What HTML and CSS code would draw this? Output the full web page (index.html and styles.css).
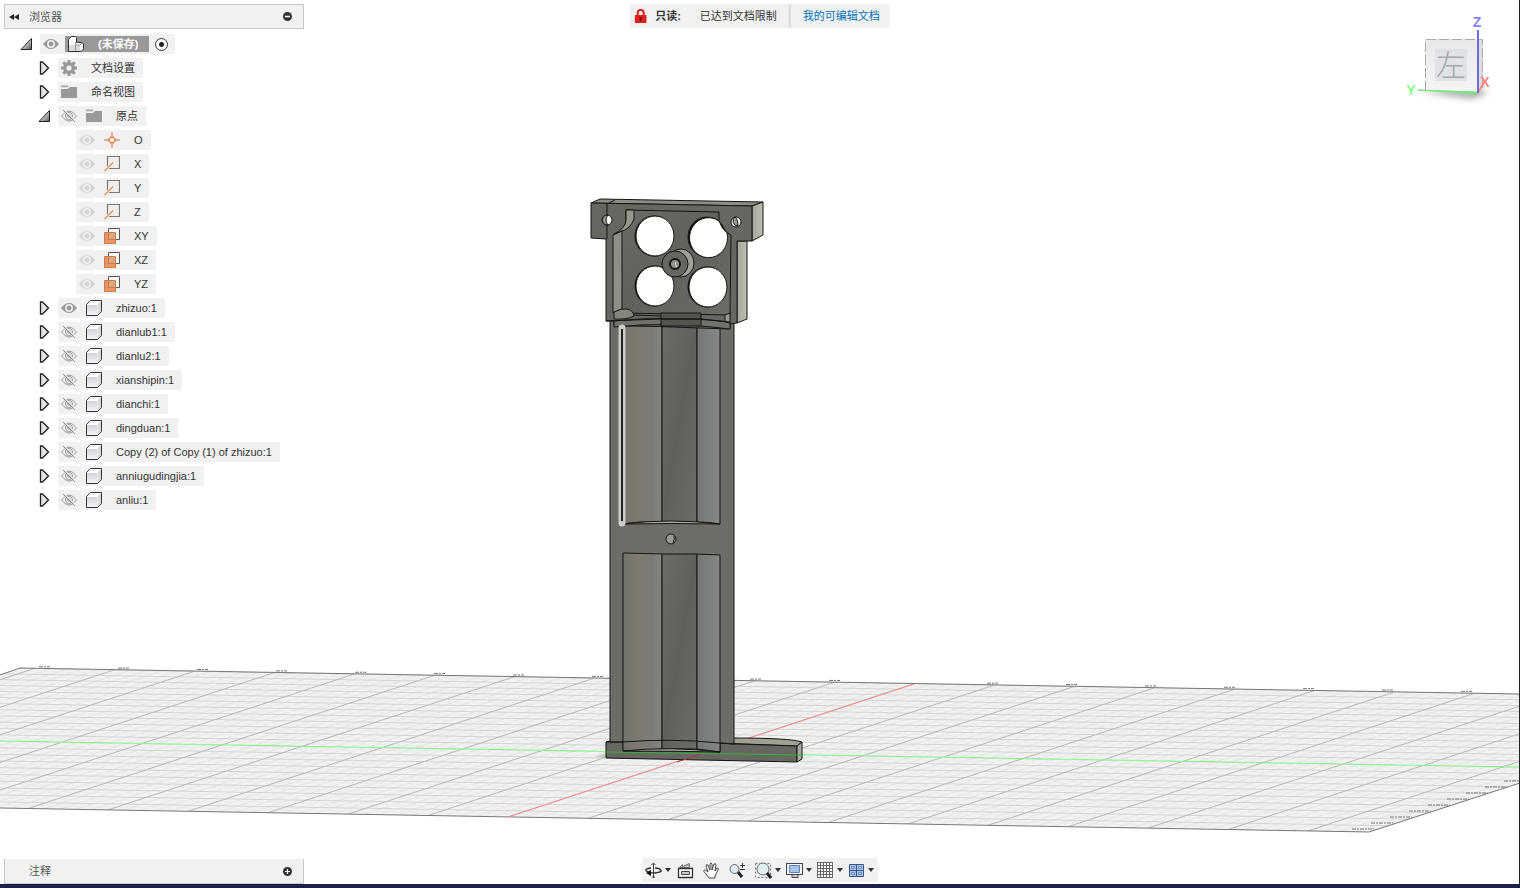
FILE: index.html
```html
<!DOCTYPE html>
<html lang="zh-CN">
<head>
  <meta charset="UTF-8">
  <title>未保存</title>
  <meta name="viewport" content="width=device-width, initial-scale=1.0">
  <link rel="stylesheet" href="styles.css">
</head>
<body>
  <!-- Shared icons -->
  <svg class="sprite" aria-hidden="true">
    <defs>
      <linearGradient id="boxShade" x1="0" y1="0" x2="0" y2="1">
        <stop offset="0" stop-color="#d3d5da"/><stop offset="1" stop-color="#f1f2f4"/>
      </linearGradient>
      <linearGradient id="openShade" x1="0" y1="0" x2="1" y2="1">
        <stop offset="0.3" stop-color="#eee"/><stop offset="1" stop-color="#555"/>
      </linearGradient>
      <symbol id="closed" viewBox="0 0 12 14"><path d="M2.500 1v12h2l6-6-6-6z" fill="#e2e3e6" stroke="#222" stroke-width="1.300"/></symbol>
      <symbol id="open" viewBox="0 0 12 14"><path d="M11.500 1.500v11H1z" fill="url(#openShade)" stroke="#222"/></symbol>
      <symbol id="eye" viewBox="0 0 16 16"><path d="M0 8q8-10 16 0q-8 10-16 0z" fill="currentColor"/><circle cx="8" cy="8" r="3.200" fill="none" stroke="#f1f1f1" stroke-width="1.500"/></symbol>
      <symbol id="eye-off" viewBox="0 0 16 16"><g fill="none" stroke="#999"><path d="M.5 8q7.500-10 15 0q-7.500 10-15 0z"/><circle cx="8" cy="8" r="3.500"/><circle cx="8" cy="8" r="1.200"/><path d="M3 1.500l12 12" stroke="#f1f1f1"/><path d="M2 2l12 12" stroke="#888"/></g></symbol>
      <symbol id="folder" viewBox="0 0 16 16"><path d="M0 5h7l2-2h7v11H0z" fill="#999"/><path d="M0 1.500h7v1.500H0z" fill="#aaa"/><path d="M0 3.500h7l1-1" stroke="#ddd" fill="none"/></symbol>
      <symbol id="gear" viewBox="0 0 16 16"><circle cx="8" cy="8" r="4.300" fill="none" stroke="#999" stroke-width="3.400"/><g stroke="#999" stroke-width="3"><path d="M8 0v3M8 13v3M0 8h3M13 8h3M2.300 2.300l2.200 2.200M11.500 11.500l2.200 2.200M2.300 13.700l2.200-2.200M11.500 4.500l2.200-2.200"/></g></symbol>
      <symbol id="box" viewBox="0 0 16 16"><path d="M.5 4.500l4-4h11v11l-4 4H.5z" fill="#fff" stroke="#333338"/><path d="M1 5h10v10H1z" fill="url(#boxShade)"/><path d="M11.500 4.500l3.500-3.500v10.500l-3.500 3.500z" fill="#d9dade"/></symbol>
      <symbol id="origin" viewBox="0 0 16 16"><path d="M8 0v16M0 8h16" stroke="#b87a50"/><path d="M8 3l5 5-5 5-5-5z" fill="#e1935b"/><circle cx="8" cy="8" r="2" fill="#fff"/></symbol>
      <symbol id="axis" viewBox="0 0 16 16"><path d="M3.500.5h12v12h-12z" fill="#eee" stroke="#777" stroke-width="1.200"/><path d="M0 15.500l9-9" stroke="#f1f1f1" stroke-width="3"/><path d="M.5 15l8.500-8.500" stroke="#e78d55" stroke-width="1.200"/></symbol>
      <symbol id="plane" viewBox="0 0 16 16"><path d="M4.500.5h11v11h-11z" fill="#fafafa" stroke="#555"/><path d="M.5 4.500h11v11H.5z" fill="#e6975f" stroke="#c87d48"/><path d="M5 5h6v6H5z" fill="#dfa77f"/><path d="M4.500 5v6.500h7" fill="none" stroke="#c87d48"/></symbol>
      <symbol id="caret" viewBox="0 0 6 4"><path d="M0 0h6L3 4z" fill="#333"/></symbol>
    </defs>
  </svg>

  <main class="workspace">
    <svg class="scene" viewBox="0 0 1520 888" preserveAspectRatio="none" role="img" aria-label="zhizuo">
      <defs>
        <clipPath id="floorClip"><path d="M-2 676L20 668L1520 694V783L1369 832L-2 808z"/></clipPath>
        <linearGradient id="metal" x1="0" y1="0" x2="1" y2="1"><stop offset="0" stop-color="#6b6c66"/><stop offset=".5" stop-color="#60615a"/><stop offset="1" stop-color="#6c6d66"/></linearGradient>
        <linearGradient id="warm"><stop offset="0" stop-color="#72726b"/><stop offset=".35" stop-color="#7f7a70"/><stop offset=".75" stop-color="#7b7c76"/><stop offset="1" stop-color="#84857f"/></linearGradient>
        <linearGradient id="cool"><stop offset="0" stop-color="#747973"/><stop offset=".5" stop-color="#7b807e"/><stop offset="1" stop-color="#858783"/></linearGradient>
        <linearGradient id="pale"><stop offset="0" stop-color="#a5a69b"/><stop offset="1" stop-color="#bdbeb3"/></linearGradient>
      </defs>

      <path d="M-2 676L20 668L1520 694V783L1369 832L-2 808z" fill="#f2f2f2"/>
      <g id="grid" clip-path="url(#floorClip)"></g>
      <path d="M0 675L20 668L1520 694M0 808L1369 832L1520 783" fill="none" stroke="#777"/>
      <g id="ticks" stroke="#777" stroke-dasharray="4 1 2 1"></g>
      <path d="M914 684L508 817" stroke="#ff8c8c"/>
      <path d="M0 741L1520 767" stroke="#8dff8d"/>
      <path d="M594 757l12-4v5z" fill="#aaa" opacity=".6"/>

      <g stroke="#151515" stroke-linejoin="round">
        <!-- foot -->
        <path d="M734 738Q790 738 802 742L797 746L720 743V739z" fill="#a0a195"/>
        <path d="M606 742L610 741H720L734 744L797 746V762L606 758z" fill="#666760"/>
        <path d="M797 746L802 742V759L797 762z" fill="#aaaba0"/>
        <!-- column -->
        <path d="M610 320H734V744L720 743V751H623V742H610z" fill="#6c6d66"/>
        <path d="M623 326H662V522Q640 521 623 524z" fill="url(#warm)"/>
        <path d="M662 324H697V522H662z" fill="url(#metal)"/>
        <path d="M697 324L720 328V524Q710 522 697 522z" fill="url(#cool)"/>
        <path d="M623 524Q670 518 720 524Q670 523 623 524z" fill="#aaaba0"/>
        <path d="M623 553L662 554V749L623 751z" fill="url(#warm)"/>
        <path d="M662 554H697V749H662z" fill="url(#metal)"/>
        <path d="M697 554L720 555V752L697 749z" fill="url(#cool)"/>
        <path d="M623 751Q670 746 720 752Q670 751 623 751z" fill="#aaaba0"/>
        <path d="M606 742L623 742Q670 738 720 743L734 744" fill="none"/>
        <circle cx="671" cy="539" r="5" fill="#9b9c93"/>
        <path d="M674 536q1 3-1 7" fill="none"/>
        <!-- bracket -->
        <path d="M591 203L600 199L763 202L752 206z" fill="#8b8c82"/>
        <path d="M752 206L763 202V235L752 241z" fill="url(#pale)"/>
        <path d="M737 241H747V319L737 323z" fill="url(#pale)"/>
        <path d="M591 203L752 206V241H737V323L730 324V329L614 325V321L606 321V239L591 238z" fill="#666760"/>
        <path d="M607 239V204L615 200" fill="none"/>
        <path d="M626 210L719 212V222Q723 231 731 235L730 315L622 313L614 312V234Q626 229 626 220z" fill="url(#metal)"/>
        <path d="M626 220V210H634V219Q630 229 622 231L613 235Q626 228 626 220z" fill="#969789"/>
        <path d="M613 235L622 231V311L613 313z" fill="#8e8f87"/>
        <g fill="#111">
          <ellipse cx="654" cy="236" rx="19" ry="20"/>
          <ellipse cx="707" cy="237" rx="19" ry="20"/>
          <ellipse cx="654" cy="286" rx="19" ry="20"/>
          <ellipse cx="707" cy="287" rx="19" ry="20"/>
        </g>
        <g fill="#fff">
          <ellipse cx="655" cy="236" rx="19" ry="20"/>
          <path d="M719 221Q722 229 727 233A19 20 0 1 1 719 221z"/>
          <ellipse cx="655" cy="286" rx="19" ry="20"/>
          <ellipse cx="708" cy="287" rx="19" ry="20"/>
          <circle cx="607" cy="220" r="5"/>
          <circle cx="736" cy="222" r="5"/>
        </g>
        <path d="M608 215q-4 5 0 10a5 5 0 0 1-1-10zM735 217q3 2 3 9a5 5 0 0 1-3-9z" fill="#999"/>
        <ellipse cx="681" cy="263" rx="13" ry="14" fill="#a0a195"/>
        <ellipse cx="675" cy="264" rx="13" ry="13" fill="#666760"/>
        <circle cx="675" cy="264" r="5" fill="#8f9086" stroke-width="2"/>
        <path d="M676 262q-2 2 1 5" fill="none" stroke="#eee"/>
        <path d="M614 312Q621 308 627 309Q633 310 634 316Q626 320 614 319z" fill="#85867d"/>
        <path d="M614 321Q670 315 730 322V329Q670 321 614 327z" fill="#71726b"/>
        <path d="M725 322V315L730 313V323z" fill="#999a90"/>
        <path d="M661 313H701V326H661z" fill="#53544d"/>
        <path d="M606 321L661 319H701L730 322M661 319H701M634 315L661 316" fill="none"/>
      </g>
      <path d="M622 328V523" stroke="#ccc" stroke-width="7" stroke-linecap="round"/>
      <path d="M622 329V521" stroke="#222" stroke-width="2"/>
      <path d="M606 752L802 755" stroke="#3fae3f"/>
      <path d="M701 754L677 762" stroke="#a33a3a"/>
    </svg>

    <section class="browser">
      <header class="panel panel-top">
        <button class="icon-btn" aria-label="收起"><svg width="10" height="6" viewBox="0 0 10 6"><path d="M5 0v6L0 3zM10 0v6L5 3z" fill="#222"/></svg></button>
        <span class="panel-title">浏览器</span>
        <button class="icon-btn" aria-label="最小化"><svg width="9" height="9" viewBox="0 0 9 9"><circle cx="4.500" cy="4.500" r="4.500" fill="#333"/><path d="M2 4.500h5" stroke="#fff" stroke-width="1.500"/></svg></button>
      </header>

      <ul class="tree">
        <li class="root">
          <button class="icon-btn toggle" aria-label="折叠"><svg><use href="#open"/></svg></button>
          <div class="chip">
            <button class="icon-btn eye" aria-label="显示"><svg><use href="#eye"/></svg></button>
            <span class="doc">
              <svg class="icon" viewBox="0 0 16 16"><path d="M.5 3.500l3-3h4l1 1v5h5l2 1.500v5l-2.500 2.500H.5z" fill="#fff" stroke="#333"/><path d="M1 9h6v6H1zM8 9h4v6H8z" fill="#d9dbdf"/><path d="M7.500 6v9M8 9h4l2-2" fill="none" stroke="#999"/></svg>
              <b>(未保存)</b>
            </span>
            <input type="radio" name="active" aria-label="激活" checked>
          </div>
        </li>
        <li>
          <button class="icon-btn toggle" aria-label="展开"><svg><use href="#closed"/></svg></button>
          <div class="chip"><svg class="icon"><use href="#gear"/></svg><span>文档设置</span></div>
        </li>
        <li>
          <button class="icon-btn toggle" aria-label="展开"><svg><use href="#closed"/></svg></button>
          <div class="chip"><svg class="icon"><use href="#folder"/></svg><span>命名视图</span></div>
        </li>
        <li>
          <button class="icon-btn toggle" aria-label="折叠"><svg><use href="#open"/></svg></button>
          <div class="chip"><button class="icon-btn eye" aria-label="隐藏"><svg><use href="#eye-off"/></svg></button><svg class="icon"><use href="#folder"/></svg><span>原点</span></div>
        </li>
        <li class="leaf"><div class="chip"><button class="icon-btn eye" aria-label="显示"><svg><use href="#eye"/></svg></button><svg class="icon"><use href="#origin"/></svg><span>O</span></div></li>
        <li class="leaf"><div class="chip"><button class="icon-btn eye" aria-label="显示"><svg><use href="#eye"/></svg></button><svg class="icon"><use href="#axis"/></svg><span>X</span></div></li>
        <li class="leaf"><div class="chip"><button class="icon-btn eye" aria-label="显示"><svg><use href="#eye"/></svg></button><svg class="icon"><use href="#axis"/></svg><span>Y</span></div></li>
        <li class="leaf"><div class="chip"><button class="icon-btn eye" aria-label="显示"><svg><use href="#eye"/></svg></button><svg class="icon"><use href="#axis"/></svg><span>Z</span></div></li>
        <li class="leaf"><div class="chip"><button class="icon-btn eye" aria-label="显示"><svg><use href="#eye"/></svg></button><svg class="icon"><use href="#plane"/></svg><span>XY</span></div></li>
        <li class="leaf"><div class="chip"><button class="icon-btn eye" aria-label="显示"><svg><use href="#eye"/></svg></button><svg class="icon"><use href="#plane"/></svg><span>XZ</span></div></li>
        <li class="leaf"><div class="chip"><button class="icon-btn eye" aria-label="显示"><svg><use href="#eye"/></svg></button><svg class="icon"><use href="#plane"/></svg><span>YZ</span></div></li>
        <li>
          <button class="icon-btn toggle" aria-label="展开"><svg><use href="#closed"/></svg></button>
          <div class="chip"><button class="icon-btn eye" aria-label="显示"><svg><use href="#eye"/></svg></button><svg class="icon"><use href="#box"/></svg><span>zhizuo:1</span></div>
        </li>
        <li>
          <button class="icon-btn toggle" aria-label="展开"><svg><use href="#closed"/></svg></button>
          <div class="chip"><button class="icon-btn eye" aria-label="隐藏"><svg><use href="#eye-off"/></svg></button><svg class="icon"><use href="#box"/></svg><span>dianlub1:1</span></div>
        </li>
        <li>
          <button class="icon-btn toggle" aria-label="展开"><svg><use href="#closed"/></svg></button>
          <div class="chip"><button class="icon-btn eye" aria-label="隐藏"><svg><use href="#eye-off"/></svg></button><svg class="icon"><use href="#box"/></svg><span>dianlu2:1</span></div>
        </li>
        <li>
          <button class="icon-btn toggle" aria-label="展开"><svg><use href="#closed"/></svg></button>
          <div class="chip"><button class="icon-btn eye" aria-label="隐藏"><svg><use href="#eye-off"/></svg></button><svg class="icon"><use href="#box"/></svg><span>xianshipin:1</span></div>
        </li>
        <li>
          <button class="icon-btn toggle" aria-label="展开"><svg><use href="#closed"/></svg></button>
          <div class="chip"><button class="icon-btn eye" aria-label="隐藏"><svg><use href="#eye-off"/></svg></button><svg class="icon"><use href="#box"/></svg><span>dianchi:1</span></div>
        </li>
        <li>
          <button class="icon-btn toggle" aria-label="展开"><svg><use href="#closed"/></svg></button>
          <div class="chip"><button class="icon-btn eye" aria-label="隐藏"><svg><use href="#eye-off"/></svg></button><svg class="icon"><use href="#box"/></svg><span>dingduan:1</span></div>
        </li>
        <li>
          <button class="icon-btn toggle" aria-label="展开"><svg><use href="#closed"/></svg></button>
          <div class="chip"><button class="icon-btn eye" aria-label="隐藏"><svg><use href="#eye-off"/></svg></button><svg class="icon"><use href="#box"/></svg><span>Copy (2) of Copy (1) of zhizuo:1</span></div>
        </li>
        <li>
          <button class="icon-btn toggle" aria-label="展开"><svg><use href="#closed"/></svg></button>
          <div class="chip"><button class="icon-btn eye" aria-label="隐藏"><svg><use href="#eye-off"/></svg></button><svg class="icon"><use href="#box"/></svg><span>anniugudingjia:1</span></div>
        </li>
        <li>
          <button class="icon-btn toggle" aria-label="展开"><svg><use href="#closed"/></svg></button>
          <div class="chip"><button class="icon-btn eye" aria-label="隐藏"><svg><use href="#eye-off"/></svg></button><svg class="icon"><use href="#box"/></svg><span>anliu:1</span></div>
        </li>
      </ul>
    </section>

    <div class="notice">
      <svg width="12" height="14" viewBox="0 0 12 14"><path d="M3 6V4a3 3 0 0 1 6 0v2" fill="none" stroke="#d92020" stroke-width="2"/><path d="M0 6h12v8H0z" fill="#e02020"/><path d="M6 8v4" stroke="#7a1010" stroke-width="2"/></svg>
      <b>只读:</b>
      <span class="notice-text">已达到文档限制</span>
      <a href="#">我的可编辑文档</a>
    </div>

    <svg class="viewcube" width="90" height="92" viewBox="1405 12 90 92" aria-label="ViewCube">
      <defs>
        <linearGradient id="face" x1="0" y1="0" x2="0" y2="1"><stop offset="0" stop-color="#e8e8e8"/><stop offset="1" stop-color="#f6f6f6"/></linearGradient>
        <filter id="soft" x="-20%" y="-80%" width="140%" height="260%"><feGaussianBlur stdDeviation="3"/></filter>
      </defs>
      <path d="M1420 92L1472 99L1488 93L1478 88z" fill="#888" filter="url(#soft)" opacity=".7"/>
      <path d="M1425 39H1478V94L1425 91z" fill="url(#face)"/>
      <path d="M1478 39L1483 40V87L1478 93z" fill="#ddd"/>
      <path d="M1435 49H1467V81H1435z" fill="#e0e2e6"/>
      <path d="M1425.500 91V39.500H1482.500V88" fill="none" stroke="#aaa" stroke-dasharray="10 3"/>
      <text class="cube-face" x="1451" y="76" text-anchor="middle">左</text>
      <path d="M1478 92L1483 85" stroke="#ff8585" stroke-width="2"/>
      <path d="M1418 90L1478 92V94z" fill="#7ee07e" stroke="#7ee07e"/>
      <path d="M1478 30V93" stroke="#6b6bee" stroke-width="2"/>
      <g class="cube-axis" text-anchor="middle">
        <text x="1477" y="27" fill="#8484ff">Z</text>
        <text x="1411" y="95" fill="#84ff84">Y</text>
        <text x="1485" y="87" fill="#ff8484">X</text>
      </g>
    </svg>

    <section class="panel panel-bottom">
      <span class="panel-title">注释</span>
      <button class="icon-btn" aria-label="添加"><svg width="9" height="9" viewBox="0 0 9 9"><circle cx="4.500" cy="4.500" r="4.500" fill="#333"/><path d="M2 4.500h5M4.500 2v5" stroke="#fff" stroke-width="1.200"/></svg></button>
    </section>

    <nav class="navbar">
      <button class="icon-btn drop" aria-label="动态观察">
        <svg width="17" height="17" viewBox="0 0 17 17"><path d="M8.500 1v15M6.500 3l2-2 2 2M7 15h3" fill="none" stroke="#444"/><path d="M6 6Q-1 7 1.500 9Q4 11 10 11Q17 10 16 8.500Q15 6 10 6" fill="none" stroke="#333" stroke-width="1.400"/><path d="M6 8v6L1 11z" fill="#111"/></svg>
        <svg class="caret"><use href="#caret"/></svg>
      </button>
      <button class="icon-btn" aria-label="观察方向"><svg width="17" height="17" viewBox="0 0 17 17"><path d="M2.500 5.500l3-3v2l7-3v4z" fill="#bbb" stroke="#777"/><path d="M1.500 6.500h14v9h-14z" fill="#fff" stroke="#333" stroke-width="1.300"/><path d="M4.500 9.500h8v3h-8z" fill="#ccc" stroke="#444"/></svg></button>
      <button class="icon-btn" aria-label="平移"><svg width="17" height="17" viewBox="0 0 17 17"><path d="M6 16L3 12Q0 9 1 8Q2 7 5 10L3 4Q3 2 5 3l2 5V2Q8 0 9 2v6l2-6q2-1 2 1l-1 6 2-3q2 0 1 2l-3 6v2z" fill="#fff" stroke="#444"/></svg></button>
      <button class="icon-btn" aria-label="缩放"><svg width="17" height="17" viewBox="0 0 17 17"><circle cx="5.500" cy="7" r="4.500" fill="#dfeaec" stroke="#667"/><path d="M9 10l4 5" stroke="#222" stroke-width="3"/><path d="M11 3.500h5M13.500 1v5M11 7.500h5" stroke="#333"/></svg></button>
      <button class="icon-btn drop" aria-label="窗口缩放">
        <svg width="17" height="17" viewBox="0 0 17 17"><path d="M.5 1.500h15v14H.5z" fill="none" stroke="#777" stroke-dasharray="2 2"/><circle cx="8" cy="7" r="6" fill="#e3eeee" stroke="#667"/><path d="M12 11l4 5" stroke="#222" stroke-width="3"/></svg>
        <svg class="caret"><use href="#caret"/></svg>
      </button>
      <button class="icon-btn drop" aria-label="显示设置">
        <svg width="17" height="17" viewBox="0 0 17 17"><path d="M.5 1.500h16v11H.5z" fill="#fff" stroke="#445" stroke-width="1.200"/><path d="M3.500 3.500h10v7h-10z" fill="#a6c5ed" stroke="#567fb8"/><path d="M6 13v2.500h6V13" fill="#ccc" stroke="#445"/></svg>
        <svg class="caret"><use href="#caret"/></svg>
      </button>
      <button class="icon-btn drop" aria-label="栅格">
        <svg width="17" height="17" viewBox="0 0 17 17"><path d="M.5.5h15v15H.5z" fill="#fff"/><path d="M.5 0v16M3.500 0v16M6.500 0v16M9.500 0v16M12.500 0v16M15.500 0v16M0 .5h16M0 3.500h16M0 6.500h16M0 9.500h16M0 12.500h16M0 15.500h16" stroke="#666"/></svg>
        <svg class="caret"><use href="#caret"/></svg>
      </button>
      <button class="icon-btn drop" aria-label="视口">
        <svg width="17" height="17" viewBox="0 0 17 17"><path d="M1.500 2.500h7v6h-7zM8.500 2.500h7v6h-7zM1.500 8.500h7v6h-7zM8.500 8.500h7v6h-7z" fill="#a6c5ed" stroke="#3d5380"/><path d="M3.500 4.500h3v2h-3zM10.500 4.500h3v2h-3zM3.500 10.500h3v2h-3zM10.500 10.500h3v2h-3z" fill="#b8d2f3" stroke="#6b8fc4"/></svg>
        <svg class="caret"><use href="#caret"/></svg>
      </button>
    </nav>
  </main>

  <script src="grid.js"></script>
</body>
</html>
```

FILE: styles.css
```css
* {
  margin: 0;
  padding: 0;
  box-sizing: border-box;
}

:root {
  --chip: #f1f1f1;
  --text: #333;
  --muted: #999;
  --link: #0073b5;
  --edge: #c8c8c8;
}

body {
  font-family: "Liberation Sans", "Noto Sans CJK SC", sans-serif;
  font-size: 11px;
  line-height: 20px;
  color: var(--text);
  background: #fff;
}

.sprite {
  position: absolute;
  width: 0;
  height: 0;
}

.workspace {
  position: relative;
  height: 100vh;
  min-height: 540px;
  overflow: hidden;
  border-right: 1px solid #222;
  border-bottom: 4px solid #1b2148;
}

/* 3D viewport */
.scene {
  position: absolute;
  top: 0;
  left: 0;
  width: 100vw;
  height: 100vh;
}

.icon-btn {
  display: flex;
  align-items: center;
  justify-content: center;
  border: none;
  background: transparent;
  color: inherit;
  cursor: pointer;
}

/* Browser panel */
.browser {
  position: relative;
  width: 308px;
  padding: 4px;
}

.panel {
  display: flex;
  align-items: center;
  height: 25px;
  padding: 0 11px 0 4px;
  background: var(--chip);
  border: 1px solid var(--edge);
}

.panel-title {
  flex: 1;
  margin-left: 10px;
  color: #555;
}

.panel-bottom {
  position: absolute;
  left: 4px;
  bottom: 0;
  width: 300px;
  border-top: none;
}

.panel-bottom .panel-title {
  margin-left: 20px;
}

.tree {
  list-style: none;
  margin-top: 5px;
}

.tree li {
  display: flex;
  align-items: center;
  height: 20px;
  margin-bottom: 4px;
  padding-left: 34px;
}

.tree .root {
  padding-left: 16px;
}

.tree .leaf {
  padding-left: 72px;
}

.toggle {
  margin-right: 8px;
}

.toggle svg {
  width: 12px;
  height: 14px;
}

.chip {
  display: flex;
  align-items: center;
  gap: 9px;
  height: 20px;
  padding: 0 8px 0 3px;
  background: var(--chip);
  white-space: nowrap;
}

.chip > span:last-child {
  margin-left: 5px;
}

.icon,
.eye svg {
  display: block;
  width: 16px;
  height: 16px;
}

.eye {
  color: var(--muted);
}

.leaf .eye {
  color: #d5d5d5;
}

.root .chip {
  gap: 6px;
  padding-right: 7px;
}

.doc {
  display: flex;
  align-items: center;
  gap: 14px;
  height: 16px;
  padding: 0 11px 0 3px;
  background: var(--muted);
  color: #fff;
}

.root input {
  appearance: none;
  width: 13px;
  height: 13px;
  border: 1px solid #333;
  border-radius: 50%;
  background: radial-gradient(#222 2px, #fff 3px);
}

/* Read-only notice */
.notice {
  position: absolute;
  top: 4px;
  left: 50%;
  display: flex;
  align-items: center;
  height: 24px;
  padding: 0 10px 0 5px;
  background: var(--chip);
  transform: translateX(-50%);
  white-space: nowrap;
}

.notice b {
  margin: 0 19px 0 9px;
}

.notice-text {
  height: 24px;
  line-height: 24px;
  padding-right: 12px;
  border-right: 2px solid #d8d8d8;
}

.notice a {
  margin-left: 12px;
  color: var(--link);
  text-decoration: none;
}

.viewcube {
  position: absolute;
  top: 12px;
  right: 24px;
}

.cube-face {
  font-family: "Noto Sans CJK SC", sans-serif;
  font-size: 30px;
  font-weight: 300;
  fill: #a5a8ad;
}

.cube-axis {
  font-size: 14px;
}

.cube-axis text {
  stroke: currentColor;
  stroke-width: 0;
  font-weight: bold;
}

/* Navigation bar */
.navbar {
  position: absolute;
  bottom: 2px;
  left: 50%;
  display: flex;
  align-items: center;
  gap: 9px;
  height: 24px;
  padding: 0 4px 0 3px;
  background: var(--chip);
  transform: translateX(-50%);
}

.drop {
  gap: 3px;
}

.drop:first-child {
  margin-right: -3px;
}

.drop + .drop {
  margin-left: -4px;
}

.caret {
  width: 6px;
  height: 4px;
}
```

FILE: grid.js
```javascript
const NS = 'http://www.w3.org/2000/svg';
const grid = document.getElementById('grid');
const ticks = document.getElementById('ticks');

function line(parent, x1, y1, x2, y2, color) {
  const el = document.createElementNS(NS, 'path');
  el.setAttribute('d', `M${x1} ${y1}L${x2} ${y2}`);
  if (color) el.setAttribute('stroke', color);
  parent.appendChild(el);
}

function diagonal(i, color) {
  const top = 914 + i * 16;
  const bottom = 508 + i * 16;
  line(grid, top, 668 + top * 0.0173, bottom, 808 + bottom * 0.0175, color);
}

for (let i = -70; i <= 70; i++) {
  diagonal(i, '#e4e4e4');
}

// rows get wider towards the viewer
for (let j = 0; j < 23; j++) {
  const y = 668 + 5.75 * j + 0.03 * j * j;
  line(grid, 0, y, 1520, y + 26, '#d4d4d4');
  line(grid, 0, y + 3, 1520, y + 29, '#ececec');
}

// every fifth diagonal is a major line
for (let i = -70; i <= 70; i += 5) {
  diagonal(i, '#bababa');
}

// scale labels seen edge-on
for (let i = -11; i <= 7; i++) {
  const x = 914 + i * 79;
  if (i && (x < 600 || x > 735)) line(ticks, x - 6, 666 + x * 0.0173, x + 5, 666 + x * 0.0173);
}
for (let k = 0; k < 9; k++) {
  line(ticks, 1352 + k * 19, 829 - k * 6, 1374 + k * 19, 829 - k * 6);
}
```
